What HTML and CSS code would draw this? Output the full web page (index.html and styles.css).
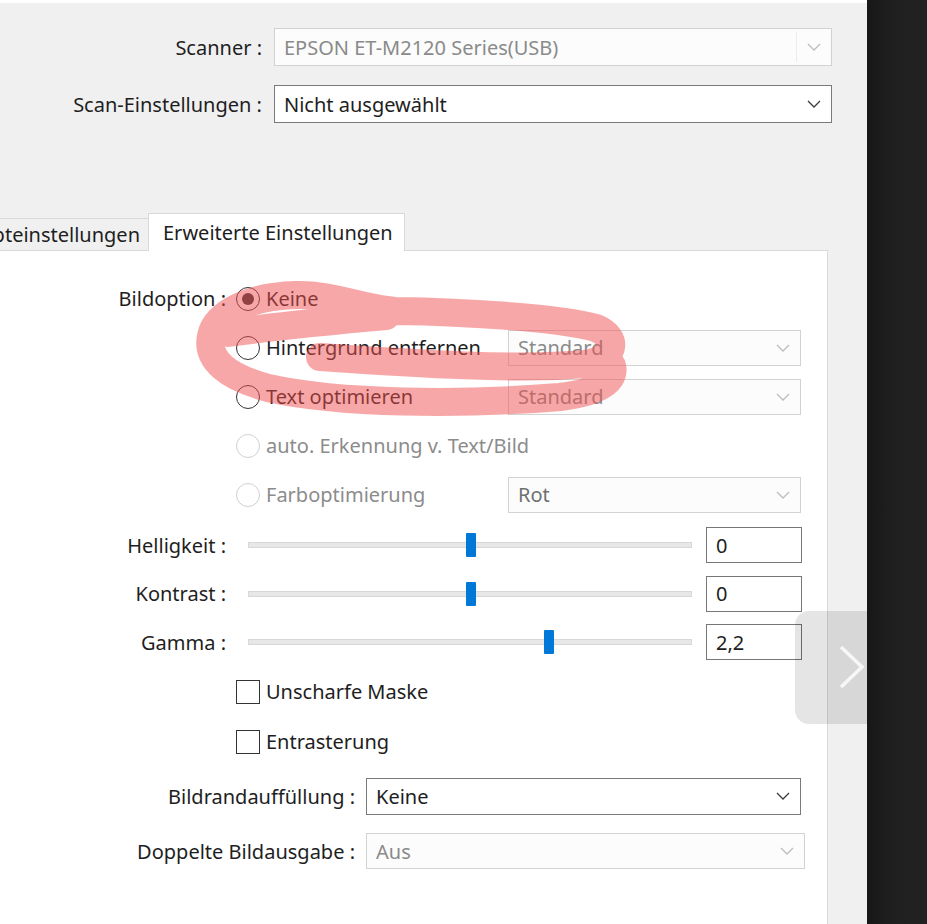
FILE: index.html
```html
<!DOCTYPE html>
<html lang="de">
<head>
    <meta charset="UTF-8">
    <meta name="viewport" content="width=device-width, initial-scale=1.0">
    <title>Epson Scan 2</title>
    <link rel="stylesheet" href="styles.css">
</head>
<body>
    <div class="screen">
        <div class="dialog">
            <div class="top-form">
                <span class="lbl">Scanner :</span>
                <div class="combo disabled split">
                    <span class="value">EPSON ET-M2120 Series(USB)</span>
                    <span class="arrow"><svg width="14" height="8" viewBox="0 0 14 8"><path d="M1 1 L7 7 L13 1"/></svg></span>
                </div>
                <span class="lbl">Scan-Einstellungen :</span>
                <div class="combo">
                    <span class="value">Nicht ausgewählt</span>
                    <span class="arrow"><svg width="14" height="8" viewBox="0 0 14 8"><path d="M1 1 L7 7 L13 1"/></svg></span>
                </div>
            </div>

            <div class="tabs">
                <div class="tab"><span>Haupteinstellungen</span></div>
                <div class="tab active">Erweiterte Einstellungen</div>
            </div>

            <div class="panel">
                <div class="group">
                    <div class="row">
                        <span class="row-lbl">Bildoption :</span>
                        <div class="choice"><span class="radio on"></span>Keine</div>
                    </div>
                    <div class="row">
                        <span class="row-lbl"></span>
                        <div class="choice"><span class="radio"></span>Hintergrund entfernen</div>
                        <div class="combo disabled small">
                            <span class="value">Standard</span>
                            <span class="arrow"><svg width="14" height="8" viewBox="0 0 14 8"><path d="M1 1 L7 7 L13 1"/></svg></span>
                        </div>
                    </div>
                    <div class="row">
                        <span class="row-lbl"></span>
                        <div class="choice"><span class="radio"></span>Text optimieren</div>
                        <div class="combo disabled small">
                            <span class="value">Standard</span>
                            <span class="arrow"><svg width="14" height="8" viewBox="0 0 14 8"><path d="M1 1 L7 7 L13 1"/></svg></span>
                        </div>
                    </div>
                    <div class="row">
                        <span class="row-lbl"></span>
                        <div class="choice off"><span class="radio"></span>auto. Erkennung v. Text/Bild</div>
                    </div>
                    <div class="row">
                        <span class="row-lbl"></span>
                        <div class="choice off"><span class="radio"></span>Farboptimierung</div>
                        <div class="combo disabled small dim">
                            <span class="value">Rot</span>
                            <span class="arrow"><svg width="14" height="8" viewBox="0 0 14 8"><path d="M1 1 L7 7 L13 1"/></svg></span>
                        </div>
                    </div>
                </div>

                <div class="group sliders">
                    <div class="row slider">
                        <span class="row-lbl">Helligkeit :</span>
                        <div class="track"><span class="thumb" style="left: 222px"></span></div>
                        <div class="num">0</div>
                    </div>
                    <div class="row slider">
                        <span class="row-lbl">Kontrast :</span>
                        <div class="track"><span class="thumb" style="left: 222px"></span></div>
                        <div class="num">0</div>
                    </div>
                    <div class="row slider">
                        <span class="row-lbl">Gamma :</span>
                        <div class="track"><span class="thumb" style="left: 300px"></span></div>
                        <div class="num">2,2</div>
                    </div>
                </div>

                <div class="group">
                    <div class="row check">
                        <span class="row-lbl"></span>
                        <div class="choice"><span class="box"></span>Unscharfe Maske</div>
                    </div>
                    <div class="row check">
                        <span class="row-lbl"></span>
                        <div class="choice"><span class="box"></span>Entrasterung</div>
                    </div>
                </div>

                <div class="group bottom">
                    <div class="row">
                        <span class="row-lbl">Bildrandauffüllung :</span>
                        <div class="combo fill">
                            <span class="value">Keine</span>
                            <span class="arrow"><svg width="14" height="8" viewBox="0 0 14 8"><path d="M1 1 L7 7 L13 1"/></svg></span>
                        </div>
                    </div>
                    <div class="row">
                        <span class="row-lbl">Doppelte Bildausgabe :</span>
                        <div class="combo disabled double">
                            <span class="value">Aus</span>
                            <span class="arrow"><svg width="14" height="8" viewBox="0 0 14 8"><path d="M1 1 L7 7 L13 1"/></svg></span>
                        </div>
                    </div>
                </div>
            </div>

            <!-- hand-drawn marker loop over the options -->
            <svg class="scribble" width="867" height="924" viewBox="0 0 867 924">
                <path d="M320 357 C420 364, 520 370, 585 364 C615 360, 620 338, 596 328 C560 318, 470 312, 395 311 C360 308, 332 294, 296 295 C252 296, 216 312, 211 336 C206 360, 228 377, 268 388 C340 404, 460 405, 560 397 C600 392, 616 380, 612 366 M228 333 C270 327, 330 321, 386 316"/>
            </svg>

            <div class="pager">
                <svg width="111" height="113" viewBox="0 0 111 113"><polyline points="46,36 67,56 46,76"/></svg>
            </div>
        </div>
        <div class="side"></div>
    </div>
</body>
</html>
```

FILE: styles.css
```css
body {
    margin: 0;
    background: #1c1c1c;
    font-family: "Noto Sans", "Open Sans", sans-serif;
    font-size: 20px;
    color: #1e1e1e;
    overflow: hidden;
}
.screen {
    display: flex;
    width: 927px;
    height: 924px;
}
.dialog {
    position: relative;
    flex: none;
    width: 867px;
    height: 924px;
    box-sizing: border-box;
    border-top: 3px solid #fff;
    background: #f0f0f0;
    overflow: hidden;
    display: flex;
    flex-direction: column;
}
.side {
    flex: 1;
    background: linear-gradient(to right, #171717, #1f1f1f 40%, #222);
}

/* top fields */
.top-form {
    display: grid;
    grid-template-columns: 262px 558px;
    column-gap: 12px;
    row-gap: 19px;
    align-items: center;
    padding-top: 25px;
}
.lbl {
    text-align: right;
    white-space: nowrap;
}

/* combo boxes */
.combo {
    height: 38px;
    box-sizing: border-box;
    border: 1px solid #7a7a7a;
    background: #fff;
    display: flex;
    align-items: center;
    flex: none;
}
.combo .value {
    flex: 1;
    padding-left: 9px;
    white-space: nowrap;
}
.combo .arrow {
    width: 34px;
    align-self: stretch;
    display: flex;
    align-items: center;
    justify-content: center;
    color: #3c3c3c;
}
.combo .arrow svg path {
    fill: none;
    stroke: currentColor;
    stroke-width: 1.3;
}
.combo.disabled {
    border-color: #d2d2d2;
    background: #fcfcfc;
    color: #8a8a8a;
}
.combo.disabled .arrow {
    color: #bdbdbd;
}
.combo.split .arrow {
    border-left: 1px solid #ececec;
    margin: 3px 0;
}
.combo.small {
    width: 293px;
    height: 36px;
}
.combo.dim {
    color: #707070;
}
.combo.fill {
    width: 435px;
    height: 37px;
    margin-left: 11px;
}
.combo.double {
    width: 439px;
    height: 36px;
    margin-left: 11px;
}

/* tabs */
.tabs {
    display: flex;
    align-items: flex-end;
    height: 38px;
    margin-top: 90px;
    position: relative;
    z-index: 1;
}
.tab {
    height: 32px;
    box-sizing: border-box;
    display: flex;
    align-items: center;
    white-space: nowrap;
}
.tab:first-child {
    width: 148px;
    justify-content: flex-end;
    padding-right: 8px;
    overflow: hidden;
    border-top: 1px solid #d9d9d9;
    margin-bottom: 1px;
}
.tab.active {
    width: 257px;
    height: 38px;
    padding-left: 14px;
    background: #fff;
    border: 1px solid #d9d9d9;
    border-bottom: none;
}

/* tab panel */
.panel {
    flex: 1;
    width: 828px;
    box-sizing: border-box;
    margin-top: -1px;
    padding-top: 23px;
    background: #fff;
    border-top: 1px solid #d9d9d9;
    border-right: 1px solid #d9d9d9;
}
.row {
    display: flex;
    align-items: center;
    height: 49px;
}
.row-lbl {
    width: 226px;
    flex: none;
    text-align: right;
    white-space: nowrap;
}
.choice {
    width: 272px;
    flex: none;
    margin-left: 10px;
    display: flex;
    align-items: center;
    gap: 6px;
    white-space: nowrap;
}
.choice.off {
    color: #8c8c8c;
}
.radio {
    width: 24px;
    height: 24px;
    box-sizing: border-box;
    border: 1px solid #333;
    border-radius: 50%;
    display: flex;
    align-items: center;
    justify-content: center;
    flex: none;
}
.radio.on::after {
    content: "";
    width: 12px;
    height: 12px;
    border-radius: 50%;
    background: #333;
}
.choice.off .radio {
    border-color: #d0d0d0;
}
.box {
    width: 24px;
    height: 24px;
    box-sizing: border-box;
    border: 1px solid #333;
    flex: none;
}
.row.check {
    height: 50px;
}

/* sliders */
.sliders {
    margin-top: 2px;
}
.row.slider {
    height: 48.5px;
}
.track {
    position: relative;
    width: 444px;
    height: 6px;
    box-sizing: border-box;
    margin-left: 22px;
    background: #e7e7e7;
    border: 1px solid #d8d8d8;
    flex: none;
}
.thumb {
    position: absolute;
    top: 50%;
    width: 10px;
    height: 24px;
    background: #0078d7;
    border-radius: 1px;
    transform: translate(-50%, -50%);
}
.num {
    width: 96px;
    height: 36px;
    box-sizing: border-box;
    margin-left: 14px;
    padding-left: 9px;
    border: 1px solid #777;
    background: #fff;
    display: flex;
    align-items: center;
}

/* bottom combos */
.bottom {
    margin-top: 2px;
}
.bottom .row {
    height: 55px;
}
.bottom .row-lbl {
    width: 355px;
}

/* overlays */
.scribble {
    position: absolute;
    left: 0;
    top: -3px;
    pointer-events: none;
}
.scribble path {
    fill: none;
    stroke: rgba(240, 80, 80, 0.5);
    stroke-width: 28;
    stroke-linecap: round;
    stroke-linejoin: round;
}
.pager {
    position: absolute;
    left: 795px;
    top: 608px;
    width: 111px;
    height: 113px;
    border-radius: 14px;
    background: rgba(0, 0, 0, 0.1);
}
.pager polyline {
    fill: none;
    stroke: #f7f7f7;
    stroke-width: 3.5;
}
```
